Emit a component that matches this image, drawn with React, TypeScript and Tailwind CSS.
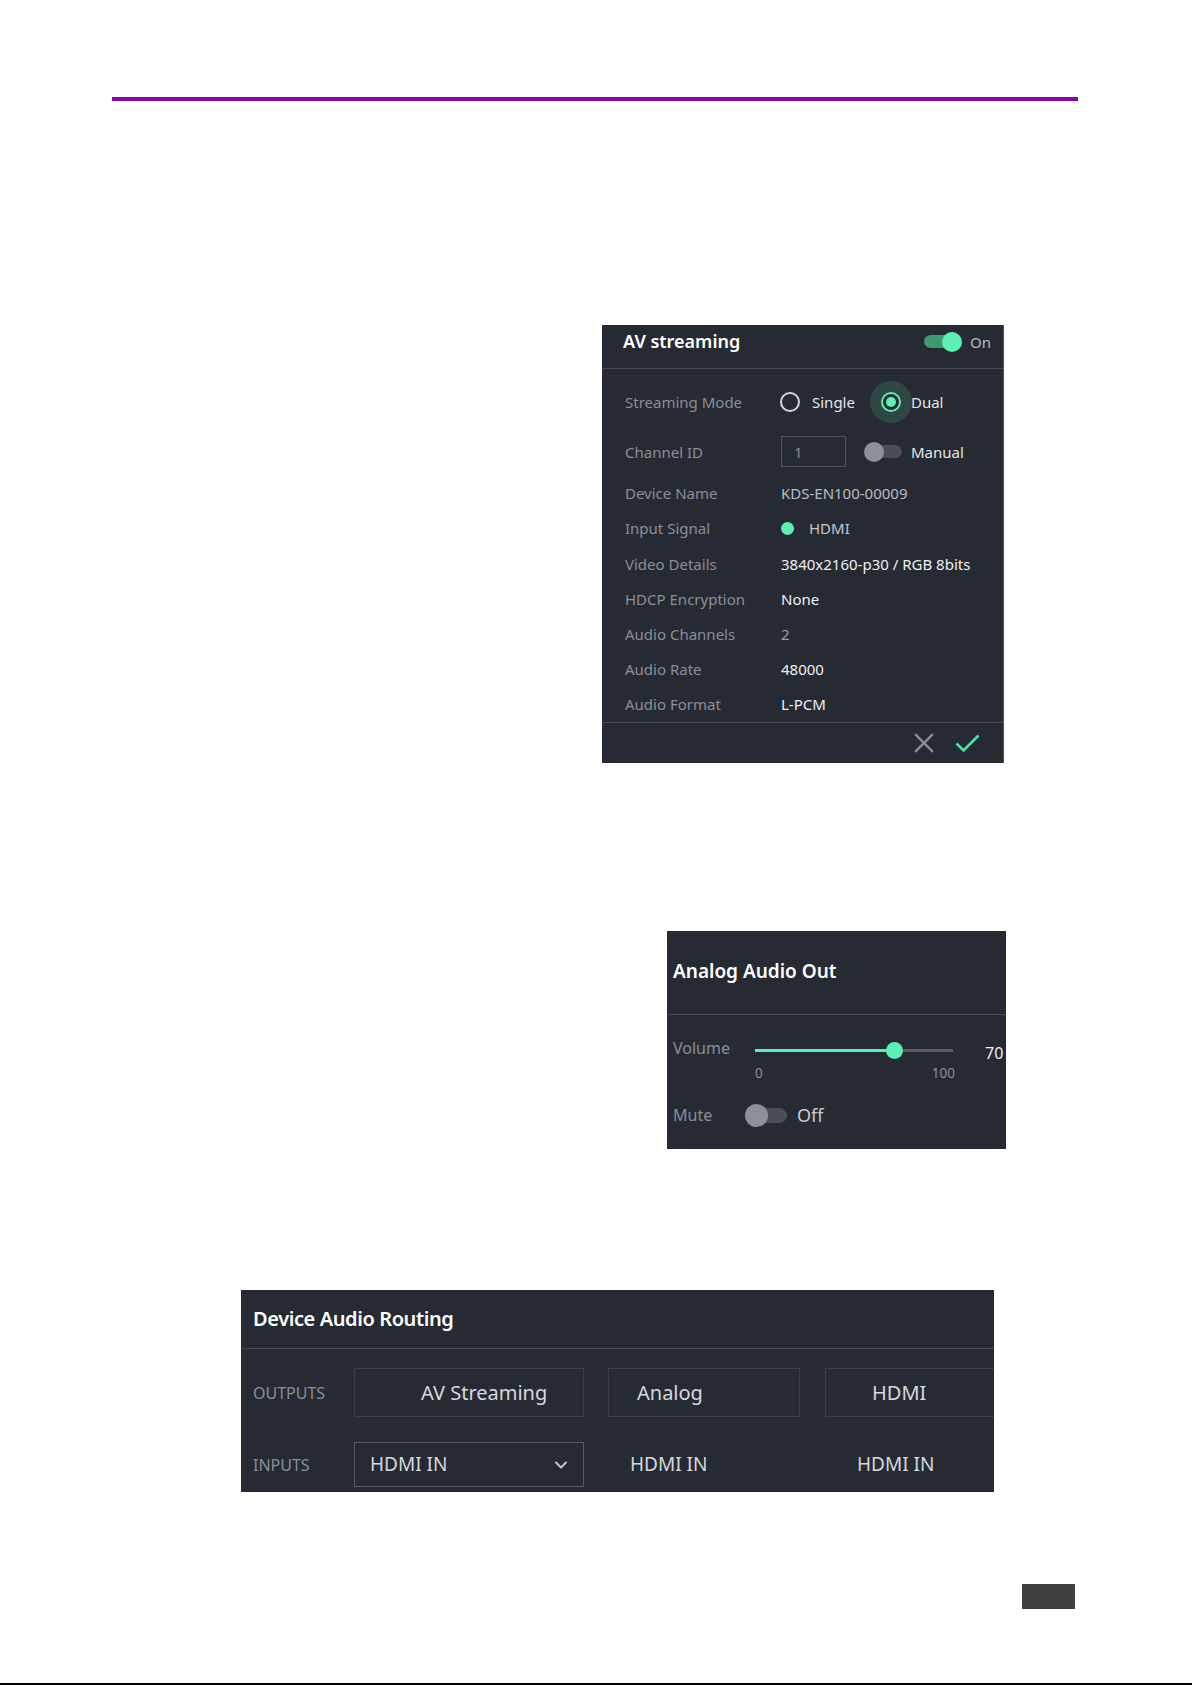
import { ChevronDown } from "lucide-react";

const font = { fontFamily: '"Noto Sans", "Open Sans", sans-serif' };

const Switch = ({ on, trackW = 36, trackH = 13, knob = 20 }: { on: boolean; trackW?: number; trackH?: number; knob?: number }) => (
  <div className="relative flex items-center" style={{ width: trackW + 4, height: knob }}>
    <div
      className={on ? "ml-[2px] rounded-full bg-[#3d9a72]" : "ml-[2px] rounded-full bg-[#4a4d55]"}
      style={{ width: trackW, height: trackH }}
    />
    <div
      className={on ? "absolute top-0 rounded-full bg-[#5cf0b4]" : "absolute top-0 rounded-full bg-[#8d9197]"}
      style={{ width: knob, height: knob, left: on ? trackW + 4 - knob : 0 }}
    />
  </div>
);

const InfoRow = ({ label, children }: { label: string; children: React.ReactNode }) => (
  <div className="flex h-[35.2px] items-center">
    <div className="w-[156px] text-[15px] text-[#8b8f97]">{label}</div>
    <div className="flex items-center text-[15px]">{children}</div>
  </div>
);

const AvStreaming = () => (
  <div className="ml-[602px] mt-[224px] flex h-[438px] w-[402px] flex-col border-r border-[#4d5057] bg-[#262a33]">
    <div className="flex h-[44px] items-center justify-between border-b border-[#464951] pb-[9px] pl-[21px] pr-[12px]">
      <div className="text-[18px] font-semibold text-white">AV streaming</div>
      <div className="flex items-center gap-[8px]">
        <Switch on />
        <span className="text-[15px] text-[#b6bac0]">On</span>
      </div>
    </div>
    <div className="flex flex-1 flex-col pl-[23px] pt-[11px]">
      <div className="flex h-[44px] items-center">
        <div className="w-[155px] text-[15px] text-[#8b8f97]">Streaming Mode</div>
        <div className="flex items-center">
          <div className="h-5 w-5 rounded-full border-2 border-[#d4d6da]" />
          <span className="ml-[12px] text-[15px] text-[#e4e6e9]">Single</span>
          <div className="ml-[26px] flex h-5 w-5 items-center justify-center rounded-full border-2 border-[#5cf0b4] shadow-[0_0_0_11px_#2e4742]">
            <div className="h-[10px] w-[10px] rounded-full bg-[#5cf0b4]" />
          </div>
          <span className="ml-[10px] text-[15px] text-[#e4e6e9]">Dual</span>
        </div>
      </div>
      <div className="flex h-[52px] items-center pt-[4px]">
        <div className="w-[156px] text-[15px] text-[#8b8f97]">Channel ID</div>
        <div className="flex h-[31px] w-[65px] items-center border border-[#50545c] pl-[12px] text-[15px] text-[#8b8f97]">1</div>
        <div className="ml-[18px]">
          <Switch on={false} trackW={36} trackH={13} knob={20} />
        </div>
        <span className="ml-[7px] text-[15px] text-[#e4e6e9]">Manual</span>
      </div>
      <InfoRow label="Device Name">
        <span className="text-[#b9bdc3]">KDS-EN100-00009</span>
      </InfoRow>
      <InfoRow label="Input Signal">
        <div className="h-[13px] w-[13px] rounded-full bg-[#5cf0b4]" />
        <span className="ml-[15px] text-[#c5c8cd]">HDMI</span>
      </InfoRow>
      <InfoRow label="Video Details">
        <span className="text-[#eef0f2]">3840x2160-p30 / RGB 8bits</span>
      </InfoRow>
      <InfoRow label="HDCP Encryption">
        <span className="text-[#eef0f2]">None</span>
      </InfoRow>
      <InfoRow label="Audio Channels">
        <span className="text-[#9a9ea5]">2</span>
      </InfoRow>
      <InfoRow label="Audio Rate">
        <span className="text-[#eef0f2]">48000</span>
      </InfoRow>
      <InfoRow label="Audio Format">
        <span className="text-[#eef0f2]">L-PCM</span>
      </InfoRow>
    </div>
    <div className="flex h-[41px] items-center justify-end gap-[21px] border-t border-[#464951] pr-[23px]">
      <svg width="20" height="20" viewBox="0 0 20 20" fill="none" stroke="#8c8f95" strokeWidth="2.4" strokeLinecap="square">
        <path d="M2 2 L18 18 M18 2 L2 18" />
      </svg>
      <svg width="25" height="20" viewBox="0 0 25 20" fill="none" stroke="#4fe3a3" strokeWidth="2.6">
        <path d="M1.5 10.5 L8.5 17.5 L23.5 2.5" />
      </svg>
    </div>
  </div>
);

const AnalogOut = () => (
  <div className="ml-[667px] mt-[168px] flex h-[218px] w-[339px] flex-col bg-[#262a33]">
    <div className="flex h-[84px] items-center border-b border-[#464951] pb-[3px] pl-[6px]">
      <div className="text-[19px] font-semibold text-white">Analog Audio Out</div>
    </div>
    <div className="flex flex-col pl-[6px] pt-[25px]">
      <div className="flex h-[20px] items-center">
        <div className="mb-[4px] w-[82px] shrink-0 text-[16px] text-[#8b8f97]">Volume</div>
        <div className="relative flex h-[20px] w-[198px] shrink-0 items-center">
          <div className="h-[3px] w-full bg-[#5a5e66]" />
          <div className="absolute left-0 h-[3px] w-[70%] bg-[#5cf0b4]" />
          <div className="absolute left-[131px] h-[17px] w-[17px] rounded-full bg-[#5cf0b4]" />
        </div>
        <div className="ml-[32px] mt-[5px] text-[16px] text-[#eef0f2]">70</div>
      </div>
      <div className="mt-[3px] flex w-[282px] justify-between pl-[82px] text-[13.5px] text-[#8b8f97]">
        <span>0</span>
        <span>100</span>
      </div>
      <div className="mt-[19px] flex h-[26px] items-center">
        <div className="w-[72px] shrink-0 text-[16px] text-[#8b8f97]">Mute</div>
        <Switch on={false} trackW={40} trackH={15} knob={23} />
        <span className="ml-[8px] text-[18px] text-[#c9ccd1]">Off</span>
      </div>
    </div>
  </div>
);

const AudioRouting = () => (
  <div className="ml-[241px] mt-[141px] flex h-[202px] w-[753px] flex-col overflow-hidden bg-[#262a33]">
    <div className="flex h-[59px] shrink-0 items-center border-b border-[#464951] pl-[12px]">
      <div className="text-[20px] font-semibold tracking-[-0.4px] text-white">Device Audio Routing</div>
    </div>
    <div className="flex flex-col pl-[12px] pt-[19px]">
      <div className="flex h-[49px] items-center">
        <div className="w-[101px] shrink-0 text-[16px] text-[#8b8f97]">OUTPUTS</div>
        <div className="flex h-[49px] w-[230px] shrink-0 items-center border border-[#3b3f47] pl-[66px] text-[20px] text-[#d6d9dd]">AV Streaming</div>
        <div className="ml-[24px] flex h-[49px] w-[192px] shrink-0 items-center border border-[#3b3f47] pl-[28px] text-[20px] text-[#d6d9dd]">Analog</div>
        <div className="ml-[25px] flex h-[49px] w-[200px] shrink-0 items-center border border-[#3b3f47] pl-[46px] text-[20px] text-[#d6d9dd]">HDMI</div>
      </div>
      <div className="mt-[25px] flex h-[45px] items-center">
        <div className="w-[101px] shrink-0 text-[16px] text-[#8b8f97]">INPUTS</div>
        <div className="flex h-[45px] w-[230px] shrink-0 items-center justify-between border border-[#565a61] pl-[15px] pr-[12px] text-[19px] text-[#d6d9dd]">
          <span>HDMI IN</span>
          <ChevronDown size={20} strokeWidth={2.2} color="#c9ccd1" />
        </div>
        <div className="ml-[24px] w-[192px] shrink-0 pl-[22px] text-[19px] text-[#d6d9dd]">HDMI IN</div>
        <div className="ml-[25px] w-[200px] shrink-0 pl-[32px] text-[19px] text-[#d6d9dd]">HDMI IN</div>
      </div>
    </div>
  </div>
);

export default function App() {
  return (
    <div className="flex h-[1685px] w-[1192px] flex-col overflow-hidden bg-white" style={font}>
      <div className="ml-[112px] mt-[97px] h-[4px] w-[966px] bg-[#8606ab]" />
      <AvStreaming />
      <AnalogOut />
      <AudioRouting />
      <div className="ml-[1022px] mt-[92px] h-[25px] w-[53px] bg-[#404040]" />
      <div className="flex-1" />
      <div className="h-[2px] w-full bg-black" />
    </div>
  );
}
